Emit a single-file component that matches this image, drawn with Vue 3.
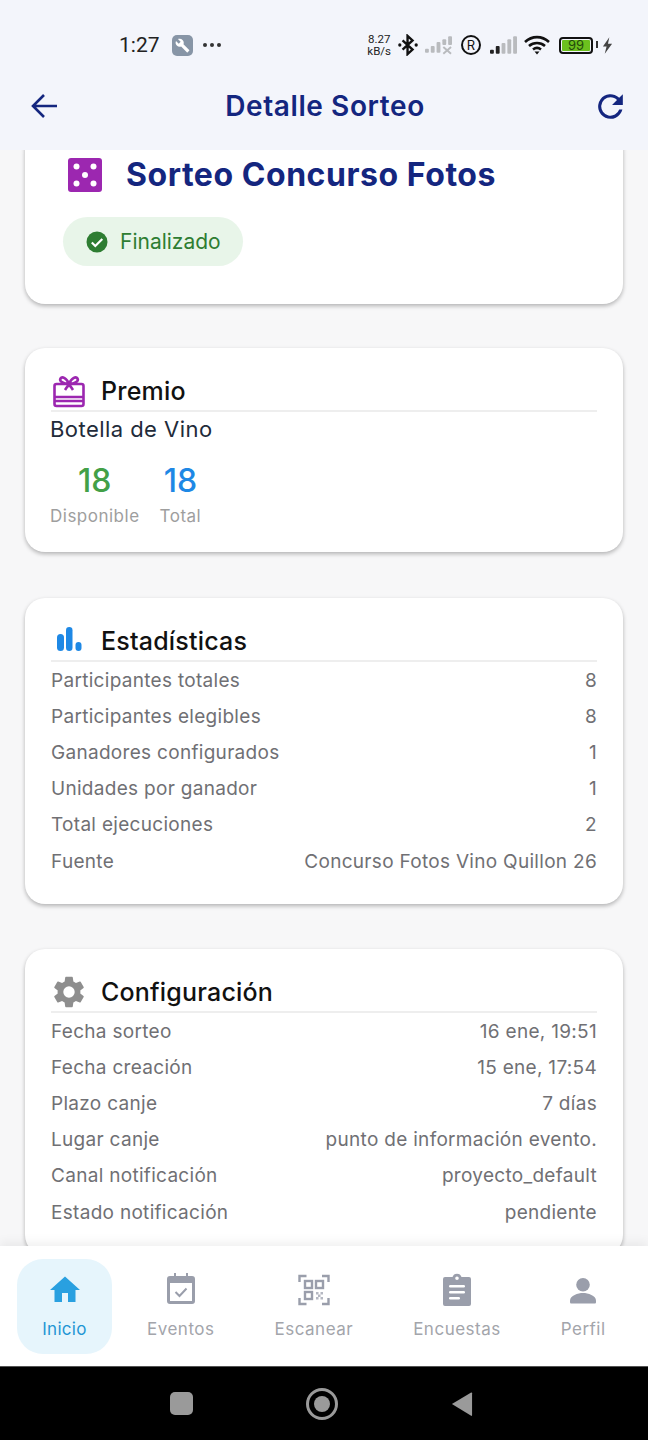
<template>
  <div class="phone">
    <header class="top">
      <div class="status">
        <div class="status-left">
          <span class="time">1:27</span>
          <span class="tool-icon">
            <svg viewBox="0 0 24 24" width="15" height="15"><path fill="#fff" d="M22.7 19l-9.1-9.1c.9-2.3.4-5-1.5-6.9-2-2-5-2.400-7.400-1.300L9 6 6 9 1.600 4.700C.4 7.100.9 10.100 2.900 12.100c1.900 1.900 4.600 2.400 6.900 1.500l9.100 9.100c.4.4 1 .4 1.400 0l2.300-2.300c.5-.4.5-1.100.1-1.400z"/></svg>
          </span>
          <span class="dots"><i></i><i></i><i></i></span>
        </div>
        <div class="status-right">
          <span class="speed">8.27<br />kB/s</span>
          <svg viewBox="0 0 22 24" width="20" height="22"><path fill="none" stroke="#111" stroke-width="2.600" d="M5 7l11 10-5.500 5V2l5.500 5L5 17"/><circle cx="2" cy="12" r="1.800" fill="#111"/><circle cx="20" cy="12" r="1.800" fill="#111"/></svg>
          <svg viewBox="0 0 28 20" width="27" height="20"><g fill="#b9bbbe"><rect x="0" y="14" width="4" height="4" rx="1"/><rect x="6" y="11" width="4" height="7" rx="1"/><rect x="12" y="7" width="4" height="11" rx="1"/><rect x="18" y="4" width="4" height="6" rx="1"/><rect x="24" y="1" width="4" height="9" rx="1"/></g><path d="M19 12l8 7M27 12l-8 7" stroke="#b9bbbe" stroke-width="2"/></svg>
          <span class="reg">R</span>
          <svg viewBox="0 0 28 20" width="27" height="20"><rect x="0" y="15" width="4" height="4" rx="1" fill="#222"/><rect x="6" y="11" width="4" height="8" rx="1" fill="#222"/><g fill="#b9bbbe"><rect x="12" y="8" width="4" height="11" rx="1"/><rect x="18" y="4" width="4" height="15" rx="1"/><rect x="24" y="1" width="4" height="18" rx="1"/></g></svg>
          <svg viewBox="0 0 26 20" width="26" height="20"><g fill="none" stroke="#111" stroke-width="2.600"><path d="M1 7c7-6.500 17-6.500 24 0"/><path d="M5 11c4.500-4 11.500-4 16 0"/><path d="M9 14.500c2.500-2 5.500-2 8 0"/></g><path d="M10.500 16.500h5L13 19.500z" fill="#111"/></svg>
          <span class="battery"><b>99</b></span>
          <svg class="bolt" viewBox="0 0 12 18" width="11" height="17"><path fill="#444" d="M8 0L1 10h4l-2 8 8-11H6.500z"/></svg>
        </div>
      </div>
      <div class="appbar">
        <svg viewBox="0 0 28 28" width="28" height="28"><path fill="none" stroke="#14267f" stroke-width="2.600" d="M27 14H3M14 3L3 14l11 11"/></svg>
        <h1>Detalle Sorteo</h1>
        <svg viewBox="0 0 24 24" width="37" height="37"><path fill="#14267f" d="M17.650 6.350A8 8 0 1 0 19.730 14h-2.080a6 6 0 1 1-5.650-8c1.660 0 3.140.690 4.220 1.780L13 11h7V4l-2.350 2.350z"/></svg>
      </div>
    </header>

    <main class="scroll">
      <section class="card head-card">
        <div class="raffle-title">
          <svg viewBox="0 0 34 34" width="34" height="34"><rect width="34" height="34" rx="3" fill="#9c27b0"/><g fill="#fff"><circle cx="8.500" cy="8.500" r="3"/><circle cx="25.500" cy="8.500" r="3"/><circle cx="17" cy="17" r="3"/><circle cx="8.500" cy="25.500" r="3"/><circle cx="25.500" cy="25.500" r="3"/></g></svg>
          <h2>Sorteo Concurso Fotos</h2>
        </div>
        <div class="pill">
          <svg viewBox="0 0 24 24" width="24" height="24"><circle cx="12" cy="12" r="10.500" fill="#2e7d32"/><path d="M6.800 12.500l3.500 3.500 7-7" fill="none" stroke="#fff" stroke-width="2.200"/></svg>
          <span>Finalizado</span>
        </div>
      </section>

      <section class="card prize-card">
        <div class="card-title">
          <svg viewBox="0 0 34 34" width="34" height="34"><g fill="none" stroke="#9c27b0" stroke-width="2.600"><rect x="2.500" y="10" width="29" height="22" rx="2"/><path d="M2.500 23h29M2.500 27h29"/><path d="M17 10c-2-6-7-8-8.500-5.500S11 10 17 10c6 0 10-3 8.500-5.500S19 4 17 10zM17 10l-4 6M17 10l4 6"/></g></svg>
          <h3>Premio</h3>
        </div>
        <p class="prize-name">Botella de Vino</p>
        <div class="counts">
          <div class="count">
            <strong class="green">18</strong>
            <span>Disponible</span>
          </div>
          <div class="count">
            <strong class="blue">18</strong>
            <span>Total</span>
          </div>
        </div>
      </section>

      <section class="card">
        <div class="card-title">
          <svg viewBox="0 0 34 34" width="34" height="34"><g fill="#1e88e5"><rect x="5" y="10" width="7" height="17" rx="3.500"/><rect x="14" y="3" width="6.500" height="24" rx="3.250"/><rect x="23.500" y="18" width="6" height="9" rx="3"/></g></svg>
          <h3>Estadísticas</h3>
        </div>
        <div class="rows">
          <div class="row" v-for="r in stats" :key="r[0]"><span>{{ r[0] }}</span><span>{{ r[1] }}</span></div>
        </div>
      </section>

      <section class="card">
        <div class="card-title">
          <svg viewBox="0 0 24 24" width="38" height="38" class="gear"><path fill="#8e8e8e" d="M19.140 12.940c.040-.300.060-.610.060-.940 0-.320-.020-.640-.070-.940l2.030-1.580a.49.49 0 0 0 .120-.610l-1.920-3.320a.49.49 0 0 0-.590-.220l-2.390.960a7 7 0 0 0-1.620-.940l-.360-2.540a.48.480 0 0 0-.480-.410h-3.840a.47.470 0 0 0-.470.410l-.360 2.540c-.590.240-1.130.570-1.620.940l-2.390-.960a.49.490 0 0 0-.590.220L2.740 8.870a.47.470 0 0 0 .120.610l2.030 1.580c-.050.300-.090.630-.090.940s.020.640.070.940l-2.030 1.580a.49.490 0 0 0-.120.610l1.920 3.320c.120.220.370.290.590.220l2.390-.960c.500.380 1.030.700 1.620.940l.360 2.540c.050.240.240.410.480.410h3.840c.240 0 .440-.170.470-.410l.360-2.540c.590-.240 1.130-.560 1.620-.940l2.390.960c.220.080.470 0 .590-.220l1.920-3.320a.47.470 0 0 0-.120-.610l-2.010-1.580zM12 15.600A3.610 3.610 0 0 1 8.400 12 3.610 3.610 0 0 1 12 8.400a3.610 3.610 0 0 1 3.600 3.600 3.610 3.610 0 0 1-3.600 3.600z"/></svg>
          <h3>Configuración</h3>
        </div>
        <div class="rows">
          <div class="row" v-for="r in config" :key="r[0]"><span>{{ r[0] }}</span><span>{{ r[1] }}</span></div>
        </div>
      </section>
    </main>

    <nav class="tabs">
      <div class="tab active">
        <svg viewBox="0 0 24 24" width="36" height="36"><path fill="#29a0e0" d="M10 20v-6h4v6h5v-8h3L12 3 2 12h3v8z"/></svg>
        <span>Inicio</span>
      </div>
      <div class="tab">
        <svg viewBox="0 2 30 32" width="30" height="32"><path fill="#9a9eab" d="M8 1h2v3h10V1h2v3h4a3 3 0 0 1 3 3v22a3 3 0 0 1-3 3H4a3 3 0 0 1-3-3V7a3 3 0 0 1 3-3h4z"/><rect x="4" y="11" width="22" height="18" fill="#fff"/><path d="M9.500 20l4 4 7-7.500" fill="none" stroke="#9a9eab" stroke-width="2"/></svg>
        <span>Eventos</span>
      </div>
      <div class="tab">
        <svg viewBox="0 0 32 32" width="32" height="32"><g fill="none" stroke="#9a9eab" stroke-width="2.400"><path d="M1.500 8V2h7M24 2h6.500v6M1.500 24v6h7M24 30h6.500v-6"/><rect x="7" y="7" width="7" height="7"/><rect x="18" y="7" width="7" height="7"/><rect x="7" y="18" width="7" height="7"/></g><g fill="#b5b8c2"><rect x="18" y="18" width="2.500" height="2.500"/><rect x="22.500" y="18" width="2.500" height="2.500"/><rect x="20" y="20.500" width="2.500" height="2.500"/><rect x="18" y="23" width="2.500" height="2.500"/><rect x="22.500" y="23" width="2.500" height="2.500"/></g></svg>
        <span>Escanear</span>
      </div>
      <div class="tab">
        <svg viewBox="0 0 30 32" width="30" height="32"><path fill="#9a9eab" fill-rule="evenodd" d="M3 3h7.500a4.700 4.700 0 0 1 9 0H27a2 2 0 0 1 2 2v25a2 2 0 0 1-2 2H3a2 2 0 0 1-2-2V5a2 2 0 0 1 2-2zm12-.500a1.800 1.800 0 1 0 0 3.600 1.800 1.800 0 0 0 0-3.600z"/><g fill="#fff"><rect x="7" y="11" width="16" height="2.500" rx="1.200"/><rect x="7" y="17" width="16" height="2.500" rx="1.200"/><rect x="7" y="23" width="11" height="2.500" rx="1.200"/></g></svg>
        <span>Encuestas</span>
      </div>
      <div class="tab">
        <svg viewBox="0 0 28 32" width="28" height="32"><g fill="#9a9eab"><circle cx="14" cy="10.800" r="6.800"/><path d="M1 28v-1.500c0-5 8-7.500 13-7.500s13 2.500 13 7.500V28c0 1-.5 1.500-1.500 1.500h-23C1.500 29.500 1 29 1 28z"/></g></svg>
        <span>Perfil</span>
      </div>
    </nav>

    <footer class="sysbar">
      <span class="sys-square"></span>
      <span class="sys-circle"><i></i></span>
      <svg viewBox="0 0 24 28" width="22" height="28"><path fill="#9a9a9a" d="M22 1.500c.6-.3 1 .1 1 .7v24c0 .6-.5 1-1 .7L1 14z"/></svg>
    </footer>
  </div>
</template>

<script setup>
const stats = [
  ["Participantes totales", "8"],
  ["Participantes elegibles", "8"],
  ["Ganadores configurados", "1"],
  ["Unidades por ganador", "1"],
  ["Total ejecuciones", "2"],
  ["Fuente", "Concurso Fotos Vino Quillon 26"],
];

const config = [
  ["Fecha sorteo", "16 ene, 19:51"],
  ["Fecha creación", "15 ene, 17:54"],
  ["Plazo canje", "7 días"],
  ["Lugar canje", "punto de información evento."],
  ["Canal notificación", "proyecto_default"],
  ["Estado notificación", "pendiente"],
];
</script>

<style>
html,
body {
  margin: 0;
  background: #000;
}
</style>

<style scoped>
.phone {
  width: 648px;
  height: 1440px;
  display: flex;
  flex-direction: column;
  overflow: hidden;
  background: #f7f7f8;
  font-family: Inter, "Liberation Sans", sans-serif;
}

.top {
  height: 150px;
  flex: none;
  background: #f3f5fb;
  z-index: 2;
}

.status {
  height: 62px;
  padding: 28px 35px 0 119px;
  box-sizing: border-box;
  display: flex;
  justify-content: space-between;
  align-items: center;
}

.status-left {
  display: flex;
  align-items: center;
}

.time {
  font-size: 21px;
  color: #222;
  font-family: Roboto, sans-serif;
  margin-right: 12px;
}

.tool-icon {
  width: 21px;
  height: 21px;
  border-radius: 5px;
  background: #8795a6;
  display: flex;
  align-items: center;
  justify-content: center;
}

.dots {
  display: flex;
  gap: 3px;
  margin-left: 10px;
}

.dots i {
  width: 4px;
  height: 4px;
  border-radius: 50%;
  background: #333;
}

.status-right {
  display: flex;
  align-items: center;
  gap: 7px;
}

.speed {
  font-size: 11.5px;
  line-height: 12px;
  text-align: center;
  color: #222;
  font-family: Roboto, sans-serif;
}

.reg {
  width: 16px;
  height: 16px;
  border: 2px solid #111;
  border-radius: 50%;
  font-size: 13px;
  line-height: 16px;
  text-align: center;
  color: #111;
  margin: 0 2px;
}

.battery {
  width: 28px;
  height: 11px;
  border: 2px solid #111;
  border-radius: 4px;
  background: #6cc01e;
  background-clip: content-box;
  padding: 1px;
  text-align: center;
  font-size: 13px;
  line-height: 11px;
  color: #234a0c;
  margin-left: 2px;
  position: relative;
}

.battery b {
  font-weight: 400;
}

.battery::after {
  content: "";
  position: absolute;
  right: -7px;
  top: 2px;
  width: 2px;
  height: 7px;
  background: #333;
}

.bolt {
  margin-left: 2px;
}

.appbar {
  height: 88px;
  padding: 0 19px 0 30px;
  display: flex;
  align-items: center;
  justify-content: space-between;
}

.appbar h1 {
  margin: 0;
  font-size: 28px;
  font-weight: 600;
  color: #14267f;
  letter-spacing: 0.6px;
}

.scroll {
  flex: 1;
  min-height: 0;
  overflow: hidden;
  padding: 0 25px;
}

.card {
  background: #fff;
  border-radius: 20px;
  box-shadow: 0 2px 4px rgba(0, 0, 0, 0.28);
  padding: 24px 26px 0;
  margin-bottom: 45px;
  height: 306px;
  box-sizing: border-box;
}

.head-card {
  height: 174px;
  margin-top: -20px;
  margin-bottom: 44px;
  padding: 28px 38px 0;
}

.raffle-title {
  display: flex;
  align-items: center;
  gap: 24px;
  margin-left: 5px;
}

.raffle-title h2 {
  margin: 0;
  font-size: 32px;
  line-height: 34px;
  font-weight: 700;
  color: #14267f;
  letter-spacing: 0.55px;
}

.pill {
  width: 180px;
  height: 49px;
  margin-top: 25px;
  box-sizing: border-box;
  background: #e8f5e9;
  border-radius: 25px;
  display: flex;
  align-items: center;
  gap: 11px;
  padding-left: 22px;
  font-size: 21px;
  color: #2e7d32;
}

.prize-card {
  height: 204px;
  margin-bottom: 46px;
}

.card-title {
  display: flex;
  align-items: center;
  gap: 15px;
  height: 38px;
  border-bottom: 2px solid #eeeeee;
  padding-left: 1px;
}

.card-title svg {
  flex: none;
}

.card-title h3 {
  margin: 0;
  font-size: 25px;
  font-weight: 500;
  letter-spacing: 0.2px;
  color: #111;
}

.gear {
  margin: 0 -2px;
}

.prize-name {
  margin: 3px 0 0 -1px;
  font-size: 22px;
  line-height: 28px;
  letter-spacing: 0.45px;
  color: #222b3a;
}

.counts {
  display: flex;
  gap: 20px;
  margin: 19px 0 0 -1px;
}

.count {
  display: flex;
  flex-direction: column;
  align-items: center;
}

.count strong {
  font-size: 32px;
  line-height: 38px;
  font-weight: 500;
}

.count span {
  font-size: 17px;
  line-height: 22px;
  margin-top: 5px;
  color: #9e9e9e;
  letter-spacing: 0.5px;
}

.green {
  color: #43a047;
}

.blue {
  color: #1e88e5;
}

.rows {
  display: flex;
  flex-direction: column;
}

.row {
  height: 36.2px;
  display: flex;
  align-items: center;
  justify-content: space-between;
  font-size: 19px;
  letter-spacing: 0.3px;
  color: #707074;
}

.tabs {
  height: 120px;
  flex: none;
  background: #fff;
  display: flex;
  align-items: center;
  padding-left: 17px;
  z-index: 2;
  box-shadow: 0 -4px 10px rgba(0, 0, 0, 0.06);
}

.tab {
  display: flex;
  flex-direction: column;
  align-items: center;
  box-sizing: border-box;
  height: 95px;
  padding: 13px 30px 0;
  font-size: 17px;
  line-height: 21px;
  letter-spacing: 0.5px;
  color: #a3a5ab;
}

.tab svg {
  height: 36px;
  margin-bottom: 11px;
}

.tab.active {
  width: 95px;
  margin-right: 5px;
  padding: 13px 0 0;
  background: #e6f5fc;
  border-radius: 26px;
  color: #1f96d4;
  letter-spacing: 0.3px;
}

.sysbar {
  height: 74px;
  flex: none;
  background: #000;
  display: flex;
  align-items: center;
  gap: 113px;
  padding-left: 170px;
  border-top: 1px solid #555;
  box-sizing: border-box;
}

.sys-square {
  width: 23px;
  height: 23px;
  border-radius: 5px;
  background: #9a9a9a;
}

.sys-circle {
  width: 26px;
  height: 26px;
  border: 3px solid #9a9a9a;
  border-radius: 50%;
  display: flex;
  align-items: center;
  justify-content: center;
}

.sys-circle i {
  width: 16px;
  height: 16px;
  border-radius: 50%;
  background: #9a9a9a;
}
</style>
